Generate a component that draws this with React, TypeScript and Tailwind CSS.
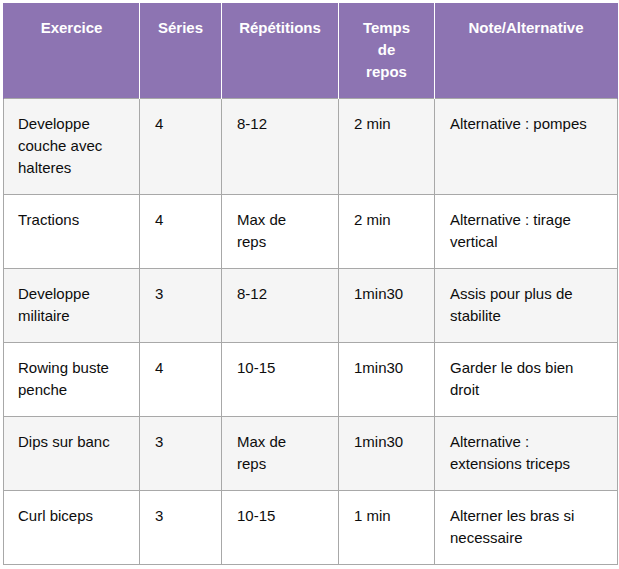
const rows: string[][] = [
  ["Developpe couche avec halteres", "4", "8-12", "2 min", "Alternative : pompes"],
  ["Tractions", "4", "Max de reps", "2 min", "Alternative : tirage vertical"],
  ["Developpe militaire", "3", "8-12", "1min30", "Assis pour plus de stabilite"],
  ["Rowing buste penche", "4", "10-15", "1min30", "Garder le dos bien droit"],
  ["Dips sur banc", "3", "Max de reps", "1min30", "Alternative : extensions triceps"],
  ["Curl biceps", "3", "10-15", "1 min", "Alterner les bras si necessaire"],
];

const headers = ["Exercice", "Séries", "Répétitions", "Temps de repos", "Note/Alternative"];
const widths = ["w-[136px]", "w-[82px]", "w-[117px]", "w-[96px]", "w-[183px]"];

export default function App() {
  return (
    <div className="w-[619px] h-[569px] bg-white pl-[3px] pt-[3px]" style={{ fontFamily: '"Liberation Sans", Arial, sans-serif' }}>
      <table className="table-fixed border-collapse w-[614px] text-[15px] leading-[22px] text-[#0d0d0d]">
        <colgroup>
          {widths.map((w, i) => (
            <col key={i} className={w} />
          ))}
        </colgroup>
        <thead>
          <tr className="h-[95px] bg-[#8d74b2]">
            {headers.map((h, i) => (
              <th
                key={i}
                className={`align-top text-center font-bold text-white pt-[14px] px-[14px] border-x border-white ${i === 0 ? "border-l-[#8d74b2]" : ""} ${i === 4 ? "border-r-[#8d74b2]" : ""}`}
              >
                {h === "Temps de repos" ? (
                  <span className="inline-block w-[50px]">Temps de repos</span>
                ) : (
                  h
                )}
              </th>
            ))}
          </tr>
        </thead>
        <tbody>
          {rows.map((r, ri) => (
            <tr key={ri} className={ri % 2 === 0 ? "bg-[#f5f5f5]" : "bg-white"}>
              {r.map((c, ci) => (
                <td
                  key={ci}
                  className={`align-top border border-[#a8a8a8] pt-[14px] pb-[15px] ${ci === 0 ? "pl-[14px] pr-[12px]" : "pl-[15px] pr-[20px]"}`}
                >
                  {c}
                </td>
              ))}
            </tr>
          ))}
        </tbody>
      </table>
    </div>
  );
}
